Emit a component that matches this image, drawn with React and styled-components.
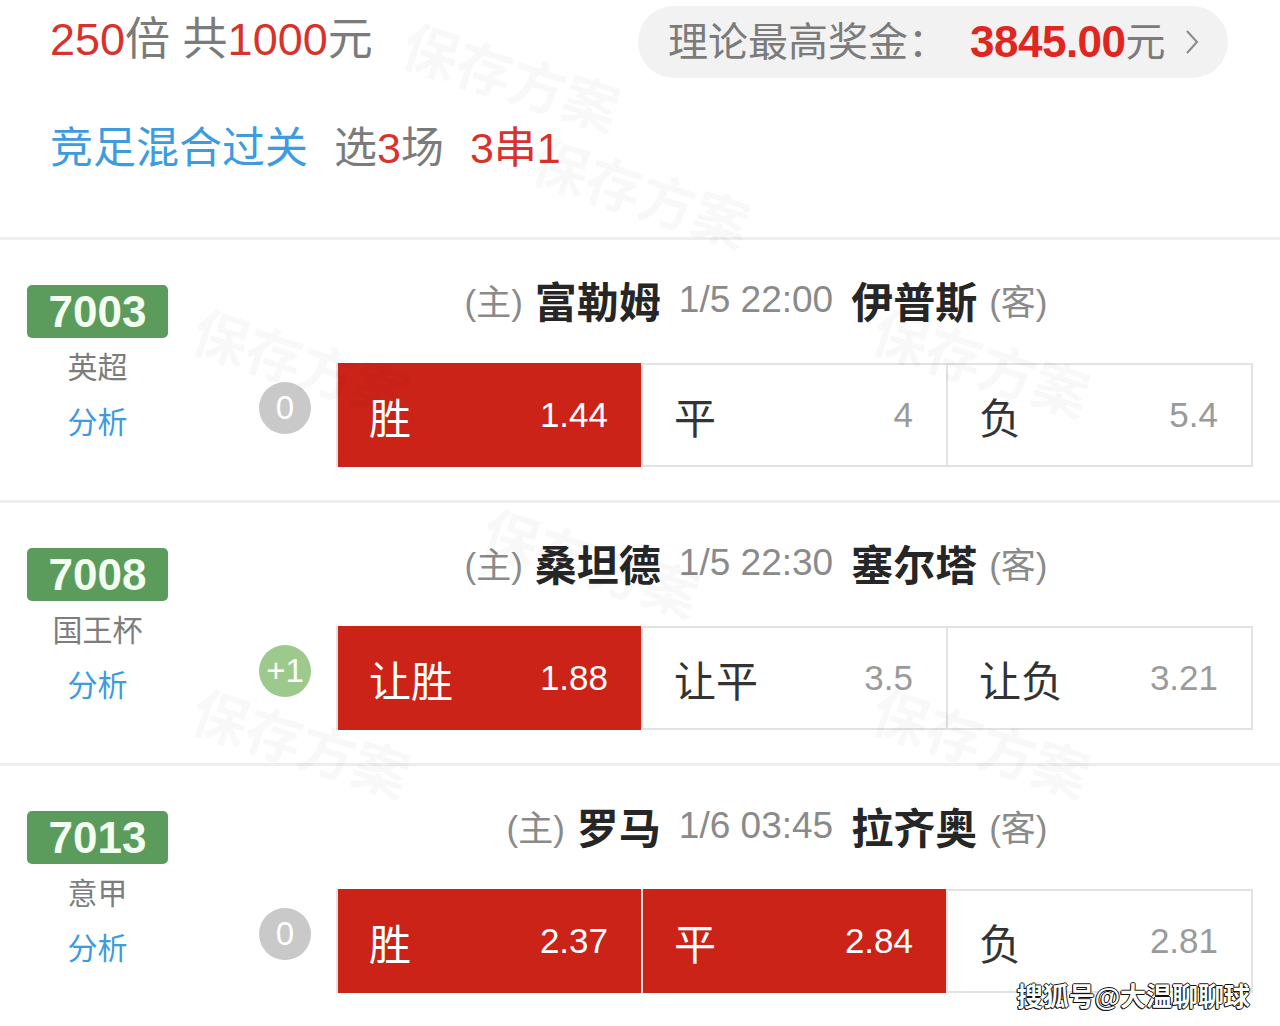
import React from 'react';
import styled, { createGlobalStyle } from 'styled-components';

const Global = createGlobalStyle`
  html, body { margin: 0; padding: 0; background: #fff; }
  body { font-family: "Liberation Sans", "Noto Sans CJK SC", sans-serif; }
`;

const Page = styled.div`
  position: relative;
  width: 1280px;
  height: 1026px;
  overflow: hidden;
  background: #fff;
`;

const Summary = styled.section`
  height: 237px;
  box-sizing: border-box;
  padding: 6px 52px 0 50px;
`;

const TopLine = styled.div`
  display: flex;
  justify-content: space-between;
  align-items: center;
  height: 72px;
`;

const Amount = styled.div`
  font-size: 45px;
  line-height: 1;
  color: #7b7b7b;
  margin-top: -6px;
  white-space: nowrap;
`;

const Red = styled.span`
  color: #d9312b;
`;

const PrizePill = styled.div`
  display: flex;
  align-items: center;
  width: 590px;
  height: 72px;
  box-sizing: border-box;
  padding: 0 26px 0 30px;
  border-radius: 36px;
  background: #f2f2f2;
  font-size: 40px;
  line-height: 48px;
  color: #7b7b7b;
  white-space: nowrap;
`;

const PrizeValue = styled.span`
  margin-left: 22px;
  color: #e0261f;
  font-weight: 700;
  font-size: 44px;
  letter-spacing: -0.5px;
`;

const Chevron = styled.svg`
  margin-left: 18px;
  width: 16px;
  height: 28px;
`;

const PlayLine = styled.div`
  margin-top: 42px;
  font-size: 43px;
  line-height: 56px;
  color: #7b7b7b;
  display: flex;
  gap: 26px;
  white-space: nowrap;
`;

const Blue = styled.span`
  color: #3d9be0;
`;

const MatchRow = styled.div`
  display: flex;
  padding: 35px 27px 33px;
  border-top: 3px solid #eeeeee;
  &:last-of-type {
    padding-bottom: 29px;
    border-bottom: 3px solid #eeeeee;
  }
`;

const Meta = styled.div`
  width: 141px;
  display: flex;
  flex-direction: column;
  align-items: center;
  margin-top: 10px;
`;

const Code = styled.div`
  width: 141px;
  height: 53px;
  border-radius: 5px;
  background: #5b9b5b;
  color: #f3fff0;
  font-weight: 700;
  font-size: 44px;
  display: flex;
  align-items: center;
  justify-content: center;
`;

const League = styled.div`
  margin-top: 10px;
  line-height: 40px;
  font-size: 30px;
  color: #7d7d7d;
`;

const Analyze = styled.div`
  margin-top: 15px;
  line-height: 40px;
  font-size: 30px;
  color: #3d9be0;
`;

const Body = styled.div`
  flex: 1;
  padding-left: 91px;
  display: flex;
  flex-direction: column;
`;

const Title = styled.div`
  display: grid;
  grid-template-columns: 1fr auto 1fr;
  column-gap: 18px;
  height: 50px;
  margin-top: -6px;
  align-items: center;
  white-space: nowrap;
`;

const Side = styled.div`
  justify-self: ${(p) => (p.$end ? 'end' : 'start')};
  display: flex;
  align-items: center;
  gap: 12px;
`;

const Tag = styled.span`
  font-size: 35px;
  color: #8a8a8a;
`;

const Team = styled.span`
  font-size: 42px;
  font-weight: 700;
  color: #262626;
`;

const Time = styled.span`
  font-size: 37px;
  color: #8a8a8a;
`;

const BetLine = styled.div`
  margin-top: 44px;
  display: flex;
  align-items: flex-start;
  gap: 25px;
`;

const Handicap = styled.div`
  margin-top: 19px;
  width: 52px;
  height: 52px;
  border-radius: 50%;
  flex: none;
  background: ${(p) => (p.$plus ? '#9dc98d' : '#c9c9c9')};
  color: #fff;
  font-size: 33px;
  display: flex;
  align-items: center;
  justify-content: center;
`;

const OddsBox = styled.div`
  flex: 1;
  display: flex;
  height: 104px;
  box-sizing: border-box;
  border: 2px solid #e2e2e2;
`;

const Cell = styled.div`
  flex: 1;
  display: flex;
  align-items: center;
  justify-content: space-between;
  padding: 0 33px 0 31px;
  background: ${(p) => (p.$on ? '#cc2318' : '#fff')};
  margin: ${(p) => (p.$on ? '-2px 0' : '0')};
  & + & {
    border-left: 2px solid #e2e2e2;
  }
`;

const CellLabel = styled.span`
  font-size: 42px;
  color: ${(p) => (p.$on ? '#fff' : '#333')};
`;

const CellOdds = styled.span`
  font-size: 35px;
  color: ${(p) => (p.$on ? '#fff' : '#9a9a9a')};
`;

const Watermark = styled.div`
  position: absolute;
  font-size: 56px;
  font-weight: 700;
  color: rgba(0, 0, 0, 0.028);
  transform: rotate(18deg);
  pointer-events: none;
  white-space: nowrap;
`;

const Credit = styled.div`
  position: absolute;
  right: 30px;
  bottom: 13px;
  font-size: 26px;
  font-weight: 700;
  color: #fff;
  white-space: nowrap;
  text-shadow: -1px 0 #111, 0 1px #111, 1px 0 #111, 0 -1px #111, -1px 1px #111;
`;

const matches = [
  {
    code: '7003', league: '英超', handicap: '0', home: '富勒姆', time: '1/5 22:00', away: '伊普斯',
    odds: [
      { label: '胜', value: '1.44', on: true },
      { label: '平', value: '4' },
      { label: '负', value: '5.4' },
    ],
  },
  {
    code: '7008', league: '国王杯', handicap: '+1', plus: true, home: '桑坦德', time: '1/5 22:30', away: '塞尔塔',
    odds: [
      { label: '让胜', value: '1.88', on: true },
      { label: '让平', value: '3.5' },
      { label: '让负', value: '3.21' },
    ],
  },
  {
    code: '7013', league: '意甲', handicap: '0', home: '罗马', time: '1/6 03:45', away: '拉齐奥',
    odds: [
      { label: '胜', value: '2.37', on: true },
      { label: '平', value: '2.84', on: true },
      { label: '负', value: '2.81' },
    ],
  },
];

const marks = [
  [400, 34], [530, 150], [190, 320], [870, 320], [480, 520], [190, 700], [870, 700],
];

export default function App() {
  return (
    <Page>
      <Global />
      <Summary>
        <TopLine>
          <Amount>
            <Red>250</Red>倍 共<Red>1000</Red>元
          </Amount>
          <PrizePill>
            理论最高奖金：
            <PrizeValue>3845.00</PrizeValue>元
            <Chevron viewBox="0 0 16 28">
              <path d="M3 3 L13 14 L3 25" fill="none" stroke="#8a8a8a" strokeWidth="2" />
            </Chevron>
          </PrizePill>
        </TopLine>
        <PlayLine>
          <Blue>竞足混合过关</Blue>
          <span>
            选<Red>3</Red>场
          </span>
          <Red>3串1</Red>
        </PlayLine>
      </Summary>
      {matches.map((m) => (
        <MatchRow key={m.code}>
          <Meta>
            <Code>{m.code}</Code>
            <League>{m.league}</League>
            <Analyze>分析</Analyze>
          </Meta>
          <Body>
            <Title>
              <Side $end>
                <Tag>(主)</Tag>
                <Team>{m.home}</Team>
              </Side>
              <Time>{m.time}</Time>
              <Side>
                <Team>{m.away}</Team>
                <Tag>(客)</Tag>
              </Side>
            </Title>
            <BetLine>
              <Handicap $plus={m.plus}>{m.handicap}</Handicap>
              <OddsBox>
                {m.odds.map((o) => (
                  <Cell key={o.label} $on={o.on}>
                    <CellLabel $on={o.on}>{o.label}</CellLabel>
                    <CellOdds $on={o.on}>{o.value}</CellOdds>
                  </Cell>
                ))}
              </OddsBox>
            </BetLine>
          </Body>
        </MatchRow>
      ))}
      {marks.map(([x, y], i) => (
        <Watermark key={i} style={{ left: x, top: y }}>保存方案</Watermark>
      ))}
      <Credit>搜狐号@大温聊聊球</Credit>
    </Page>
  );
}
